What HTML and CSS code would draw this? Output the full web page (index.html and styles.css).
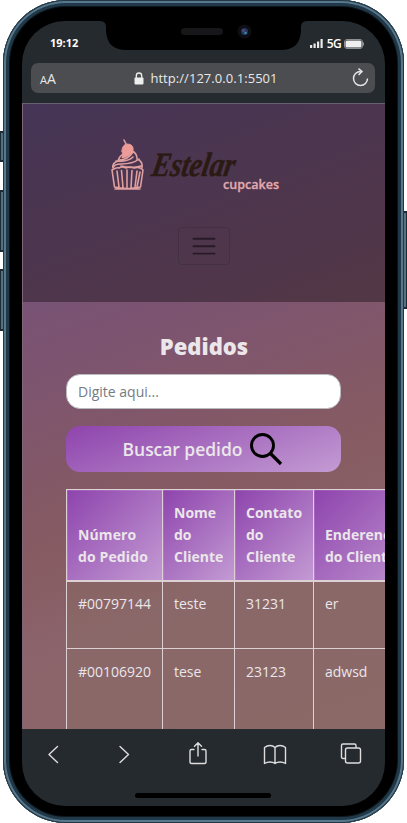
FILE: index.html
```html
<!DOCTYPE html>
<html lang="pt-BR">
<head>
<meta charset="utf-8">
<title>Pedidos</title>
<link rel="stylesheet" href="styles.css">
</head>
<body>
<div class="phone">
  <i class="key key-mute"></i><i class="key key-up"></i><i class="key key-down"></i><i class="key key-power"></i>
  <div class="shell">
    <div class="screen">
      <header class="status">
        <span class="time">19:12</span>
        <span class="signal">
          <svg width="14" height="10" viewBox="0 0 14 10" fill="#e8e8e8"><rect x="0" y="6" width="2.2" height="3"/><rect x="3.5" y="4.5" width="2.2" height="4.5"/><rect x="7" y="2.5" width="2.2" height="6.5"/><rect x="10.5" y="0" width="2.2" height="9"/></svg>
          <b>5G</b>
          <svg width="21" height="10" viewBox="0 0 21 10"><rect x=".5" y=".5" width="18" height="9" rx="2.5" fill="none" stroke="#8c8f92"/><rect x="1.5" y="1.5" width="16" height="7" rx="1.5" fill="#efefef"/><path d="M19.5 3.5v3" stroke="#8c8f92"/></svg>
        </span>
      </header>
      <div class="address">
        <span class="aa"><small>A</small>A</span>
        <span class="url"><svg width="10" height="13" viewBox="0 0 10 13"><path d="M2.3 6V3.7a2.7 2.7 0 0 1 5.400 0V6" fill="none" stroke="#eee" stroke-width="1.3"/><rect x=".5" y="5.5" width="9" height="7" rx="1" fill="#eee"/></svg>http://127.0.0.1:5501</span>
        <svg class="reload" width="17" height="19" viewBox="0 0 17 19" fill="none" stroke="#e4e4e4" stroke-width="1.5"><path d="M8.500 3.500a7 7 0 1 0 7 7M6.500 .6l3.500 3-3.500 3.400"/></svg>
      </div>
      <main class="page">
        <nav class="nav">
          <svg class="logo" width="180" height="60" viewBox="0 0 180 60">
            <g fill="none" stroke="#dfa09f" stroke-width="1.6" stroke-linejoin="round" stroke-linecap="round">
              <path d="M1 31l2.500 17q12 3 26 0l2.500-17M1 31q5-3 7-2 3-2 7 0 4-2 8 0 5-2 9 2M6 32l2 16M10.500 31.500l1.500 17M16 31v18M21 31.500l-1 17M26 32l-2 16M29 33l-3 15M4 50h25"/>
              <path d="M2 29q-1-5 5-7 1-5 7-8M2 29q1-4 8-4 12 0 18-5M31 29q1-7-5-9 0-6-5-8M8 21q9 0 14-8M5 22q12 1 17-4M10 27q11 3 20 0"/>
              <path d="M11 12q0-6 5-7 7 0 6 7-2 5-11 7 2-3 0-7z" fill="#ec9b98" stroke="#ec9b98" stroke-width="1"/><path d="M15 5l-2-4"/>
            </g>
            <text class="brand" x="39" y="37" textLength="83" lengthAdjust="spacingAndGlyphs" transform="translate(7 0) skewX(-10)">Estelar</text>
            <text class="sub" x="112" y="50" textLength="56" lengthAdjust="spacingAndGlyphs">cupcakes</text>
          </svg>
          <button class="burger"><svg width="24" height="20" viewBox="0 0 24 20" stroke="#281a27" stroke-width="1.9" stroke-linecap="round"><path d="M1.500 2.700h21M1.500 10.200h21M1.500 17.600h21"/></svg></button>
        </nav>
        <section class="content">
          <h1>Pedidos</h1>
          <input class="query" type="text" placeholder="Digite aqui...">
          <button class="search">Buscar pedido<svg width="34" height="34" viewBox="0 0 34 34" fill="none" stroke="#000"><circle cx="13.500" cy="13.500" r="11" stroke-width="2.900"/><path d="M21.500 21.500L32 32" stroke-width="3.200"/></svg></button>
          <table class="orders">
            <colgroup><col class="c1"><col class="c2"><col class="c3"><col class="c4"></colgroup>
            <thead><tr><th>Número<br>do Pedido</th><th>Nome<br>do<br>Cliente</th><th>Contato<br>do<br>Cliente</th><th>Enderenço<br>do Cliente</th></tr></thead>
            <tbody>
              <tr><td>#00797144</td><td>teste</td><td>31231</td><td>er</td></tr>
              <tr class="tall"><td>#00106920</td><td>tese</td><td>23123</td><td>adwsd</td></tr>
            </tbody>
          </table>
        </section>
      </main>
      <footer class="toolbar">
        <div class="tools">
          <svg width="20" height="24" viewBox="0 0 20 24"><path d="M14.500 4.500l-8.500 8 8.500 8"/></svg>
          <svg width="20" height="24" viewBox="0 0 20 24"><path d="M5 4.500l8.500 8-8.500 8"/></svg>
          <svg width="20" height="24" viewBox="0 0 20 24"><path d="M6 7.500H3.500Q2 7.500 2 9v11Q2 21.500 3.500 21.500h13q1.500 0 1.500-1.500V9Q18 7.500 16.500 7.500H14M10 14V.8M6.500 4.300L10 .8 13.500 4.300"/></svg>
          <svg width="24" height="24" viewBox="0 0 24 24"><path d="M12 5.500Q10 3.500 7 3.500T1.500 5.500v16Q4 20 7 20t5 1.500Q14 20 17 20t5.500 1.500V5.500Q20 3.500 17 3.500t-5 2zv16"/></svg>
          <svg width="22" height="24" viewBox="0 0 22 24"><path d="M5 16.500H3Q1.500 16.500 1.500 15V3.500Q1.500 2 3 2h11.500Q16 2 16 3.500v2"/><rect x="5.500" y="6" width="15" height="15" rx="2"/></svg>
        </div>
        <div class="home"></div>
      </footer>
      <svg class="notch" width="207" height="30" viewBox="0 0 207 30"><path d="M0 0h207q-6 0-6 6v4q-1 19-20 19H26Q7 29 6 10V6q0-6-6-6z"/><rect x="81" y="7" width="42" height="7" rx="3.500" fill="#171719"/><circle cx="144.500" cy="10.500" r="7" fill="#0d0d13"/><circle cx="144.500" cy="10.500" r="3.500" fill="#233756"/><circle cx="143.500" cy="9.500" r="1.600" fill="#4a4780"/><circle cx="145.500" cy="12" r="1.300" fill="#3486b5"/></svg>
    </div>
  </div>
</div>
</body>
</html>
```
FILE: styles.css
```css
* { box-sizing: border-box; }
body { margin: 0; background: #fff; font-family: "Open Sans", "Noto Sans", sans-serif; overflow: hidden; }
.phone { position: relative; width: 407px; height: 823px; padding: 0 3px; }
.key { position: absolute; width: 5px; background: #54717f; border: 1px solid #1c2b35; border-width: 2px 1px; }
.key-mute { left: 0; top: 131px; height: 31px; }
.key-up { left: 0; top: 190px; height: 62px; }
.key-down { left: 0; top: 269px; height: 62px; }
.key-power { right: 0; top: 211px; height: 98px; }
.shell { position: relative; width: 401px; height: 823px; border-radius: 63px; background: #000; padding: 21px 19px 17px;
  box-shadow: inset 0 0 0 1px #233844, inset 0 0 0 3px #57778c, inset 0 0 0 6px #203847, inset 0 0 0 7px #0b151c; }
.screen { position: relative; display: flex; flex-direction: column; width: 363px; height: 785px; border-radius: 43px; overflow: hidden; background: #252a2e; }
.status { display: flex; justify-content: space-between; height: 42px; padding: 14px 20px 0 28px; color: #fff; font-size: 11px; line-height: 16px; font-weight: 700; }
.signal { display: flex; align-items: center; gap: 3px; height: 16px; padding-top: 2px; font-size: 11px; letter-spacing: -.3px; }
.signal b { font-weight: 600; font-size: 12px; letter-spacing: -.6px; }
.address { display: flex; align-items: center; justify-content: space-between; flex: none; height: 30px; margin: 0 10px 10px 9px; padding: 0 6px 0 9px; border-radius: 7px; background: #4b4d51; color: #e8e8e8; font-size: 13px; }
.aa { width: 17px; font-size: 14px; }
.aa small { font-size: 11px; }
.url { display: flex; align-items: center; gap: 6px; margin-left: 3px; letter-spacing: .05px; }
.reload { margin-top: -2px; }
.page { flex: none; height: 626px; overflow: hidden; border-top: 1px solid #686070; border-left: 1px solid #826578;
  background: linear-gradient(160deg, #6c5285 0%, #7b5372 32%, #865b62 60%, #8c646b 74%, #8c6668 100%); }
.nav { display: flex; flex-direction: column; align-items: center; height: 198px; padding-top: 35px; background: rgba(0, 0, 0, .35); }
.logo { flex: none; margin-left: -6px; }
.brand { font: italic 700 34px "Liberation Serif", serif; fill: #2b1a14; stroke: #2b1a14; stroke-width: .5px; }
.sub { font: 600 13px "Open Sans", sans-serif; fill: #e3aaae; stroke: #e3aaae; stroke-width: .3px; }
.burger { display: flex; align-items: center; justify-content: center; width: 52px; height: 38px; margin: 28px 1px 0 0; padding: 0; border: 1px solid #433040; border-radius: 4px; background: none; }
.content { padding: 28px 43px 0; color: #ebe6ea; }
h1 { margin: 0 0 12px; font-size: 22px; line-height: 32px; font-weight: 800; text-align: center; }
.query { display: block; width: 275px; height: 35px; padding: 0 11px; border: 1px solid #b9babd; border-radius: 14px; background: #fff; font: 14px "Open Sans", sans-serif; }
.query::placeholder { color: #737b82; opacity: 1; }
.search { display: flex; align-items: center; justify-content: center; gap: 7px; width: 275px; height: 46px; margin: 17px 0; padding: 0 1px 1px 0; border: 0; border-radius: 14px; background: linear-gradient(160deg, #8e44ad, #c39bd3); color: #ebe6ea; font: 600 17.5px "Open Sans", sans-serif; letter-spacing: -.05px; }
.orders { width: 370px; table-layout: fixed; border-collapse: collapse; font-size: 14px; line-height: 22px; background: rgba(132, 132, 90, .13); }
.c1 { width: 96px; } .c2 { width: 72px; } .c3 { width: 79px; } .c4 { width: 123px; }
th, td { padding: 11px; border: 1px solid #ddd1d6; text-align: left; vertical-align: top; white-space: nowrap; }
th { height: 91px; padding-bottom: 12px; padding-top: 10px; vertical-align: bottom; border-bottom-width: 2px; background: linear-gradient(135deg, #8e44ad, #c39bd3); }
thead th:first-child { letter-spacing: .12px; }
td { height: 68px; }
.tall td { height: 110px; padding-top: 12px; }
.toolbar { flex: none; height: 77px; padding: 13px 22px 0 21px; }
.tools { display: grid; grid-template-columns: 72px 73px 75px 77px 22px; fill: none; stroke: #dedede; stroke-width: 1.4; stroke-linejoin: round; stroke-linecap: round; }
.home { width: 136px; height: 5px; margin: 27px 0 0 92px; border-radius: 3px; background: #000; }
.notch { position: absolute; left: 78px; top: 0; }
```
